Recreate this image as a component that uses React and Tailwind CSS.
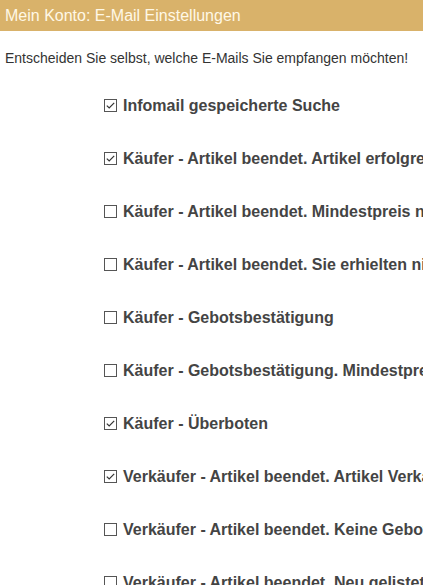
const options = [
  { label: 'Infomail gespeicherte Suche', checked: true },
  { label: 'Käufer - Artikel beendet. Artikel erfolgreich ersteigert', checked: true },
  { label: 'Käufer - Artikel beendet. Mindestpreis nicht erreicht', checked: false },
  { label: 'Käufer - Artikel beendet. Sie erhielten nicht den Zuschlag', checked: false },
  { label: 'Käufer - Gebotsbestätigung', checked: false },
  { label: 'Käufer - Gebotsbestätigung. Mindestpreis nicht erreicht', checked: false },
  { label: 'Käufer - Überboten', checked: true },
  { label: 'Verkäufer - Artikel beendet. Artikel Verkauft', checked: true },
  { label: 'Verkäufer - Artikel beendet. Keine Gebote', checked: false },
  { label: 'Verkäufer - Artikel beendet. Neu gelistet', checked: false },
];

function Box({ checked }) {
  return (
    <svg width="13" height="13" viewBox="0 0 13 13" className="shrink-0">
      <rect x="0.5" y="0.5" width="12" height="12" fill="#fff" stroke="#555" />
      {checked && (
        <path d="M2.8 6.6 L5.2 9 L10.2 3.8" fill="none" stroke="#333" strokeWidth="1.2" />
      )}
    </svg>
  );
}

export default function App() {
  return (
    <div className="w-[423px] h-[585px] overflow-hidden bg-white font-['Liberation_Sans',Arial,sans-serif]">
      {/* Kopfzeile */}
      <div className="h-[31px] bg-[#d9b26a] px-[5px] flex items-center text-[16px] text-[#fff8e6]">
        Mein Konto: E-Mail Einstellungen
      </div>

      <p className="mt-[18px] px-[5px] text-[14px] leading-[18px] text-[#333]">
        Entscheiden Sie selbst, welche E-Mails Sie empfangen möchten!
      </p>

      <ul className="mt-[12px] pl-[104px]">
        {options.map((o) => (
          <li key={o.label} className="h-[53px] flex items-center gap-[6px] whitespace-nowrap">
            <Box checked={o.checked} />
            <span className="text-[16px] font-bold text-[#444]">{o.label}</span>
          </li>
        ))}
      </ul>
    </div>
  );
}
